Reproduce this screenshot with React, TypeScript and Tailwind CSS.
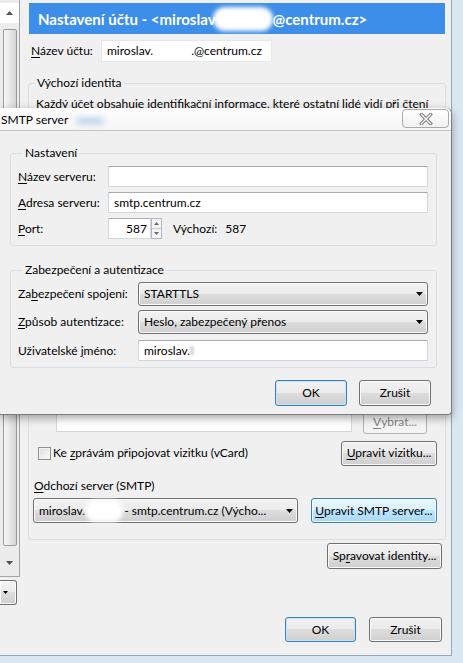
import React from 'react'

const btnNormal =
  'border border-[#707070] rounded-[3px] bg-[linear-gradient(#f2f2f2_0%,#ebebeb_49%,#dddddd_50%,#cfcfcf_100%)] shadow-[inset_0_0_0_1px_#fbfbfb]'
const btnFocus =
  'border border-[#3c7fb1] rounded-[3px] bg-[linear-gradient(#f2f2f2_0%,#ebebeb_49%,#dddddd_50%,#cfcfcf_100%)] shadow-[inset_0_0_0_1px_#c2e7f9]'
const btnHover =
  'border border-[#3c7fb1] rounded-[3px] bg-[linear-gradient(#eaf6fd_0%,#d9f0fc_49%,#bee6fd_50%,#a7d9f5_100%)] shadow-[inset_0_0_0_1px_#f4fbff]'
const textbox = 'bg-white border border-[#d3d6dc] border-t-[#abadb3]'

function Arrow({ color = '#000' }: { color?: string }) {
  return (
    <svg width="7" height="4" viewBox="0 0 7 4">
      <path d="M0 0h7L3.5 4z" fill={color} />
    </svg>
  )
}

function Btn({
  children,
  className = '',
  look = btnNormal,
}: {
  children: React.ReactNode
  className?: string
  look?: string
}) {
  return (
    <div className={`flex items-center justify-center ${look} ${className}`}>
      {children}
    </div>
  )
}

function Combo({ children, className = '' }: { children: React.ReactNode; className?: string }) {
  return (
    <div className={`flex items-center justify-between pl-[5px] pr-[4px] ${btnNormal} ${className}`}>
      <div className="flex items-center whitespace-nowrap">{children}</div>
      <Arrow />
    </div>
  )
}

export default function App() {
  return (
    <div className="relative w-[463px] h-[663px] overflow-hidden bg-[#d9e7f1] font-['Segoe_UI',Lato,sans-serif] text-[12px] leading-[16px] text-black">
      {/* background window: account settings */}
      <div className="flex w-[452px] h-[656px] bg-[#f0f0f0] border-r border-b border-[#8fa9bd]">
        {/* left account list */}
        <div className="flex flex-col w-[20px]">
          <div className="flex flex-col w-[20px] h-[577px] bg-white border-r border-b border-[#a5a5a5]">
            <div className="flex flex-col h-full w-[19px] bg-[#ececec]">
              <div className="flex items-center justify-center h-[20px] mt-[3px] bg-white">
                <svg width="7" height="4" viewBox="0 0 7 4">
                  <path d="M0 4h7L3.5 0z" fill="#505050" />
                </svg>
              </div>
              <div className="ml-[3px] mt-[6px] w-[14px] h-[517px] border border-[#9a9a9a] rounded-[2px] bg-[linear-gradient(90deg,#f6f6f6,#e3e3e3_60%,#d4d4d4)]" />
              <div className="flex items-center justify-center flex-1 pt-[4px]">
                <Arrow color="#505050" />
              </div>
            </div>
          </div>
          <div className={`mt-[3px] h-[25px] w-[17px] flex items-center pl-[3px] border-l-0 rounded-l-none ${btnNormal}`}>
            <svg width="5" height="3" viewBox="0 0 5 3">
              <path d="M0 0h5L2.5 3z" fill="#000" />
            </svg>
          </div>
        </div>

        {/* right pane */}
        <div className="flex flex-col pl-[8px] w-[432px]">
          <div className="ml-[1px] mt-[3px] w-[416px] h-[31px] bg-[#3d8ee8] flex items-center pl-[9px] text-white font-bold text-[15px] whitespace-nowrap">
            Nastavení účtu - &lt;miroslav
            <span className="inline-block w-[60px] h-[24px] -ml-[3px] bg-white rounded-full blur-[2px]" />
            @centrum.cz&gt;
          </div>

          <div className="flex items-center mt-[6px] h-[22px]">
            <span className="ml-[3px] w-[70px]">
              <u className="underline-offset-2">N</u>ázev účtu:
            </span>
            <div className="flex items-center w-[171px] h-[22px] pl-[5px] bg-white border border-[#e6e8ec]">
              miroslav.<span className="inline-block w-[38px]" />.@centrum.cz
            </div>
          </div>

          <fieldset className="mt-[13px] w-[418px] border border-[#d5dfe5] rounded-[3px] pl-[5px] pr-[8px] pb-[16px]">
            <legend className="ml-[1px] px-[2px] h-[16px]">Výchozí identita</legend>
            <p className="mt-[5px] ml-[2px] h-[16px] whitespace-nowrap overflow-hidden">
              Každý účet obsahuje identifikační informace, které ostatní lidé vidí při čtení
            </p>
            <div className="h-[298px]" />
            <div className="flex items-start h-[24px]">
              <div className={`ml-[22px] w-[296px] h-[22px] ${textbox}`} />
              <div className="ml-[11px] w-[64px] h-[24px] flex items-center justify-center border border-[#adb2b5] rounded-[3px] bg-[#f4f4f4] text-[#838383]">
                <u className="underline-offset-2">V</u>ybrat...
              </div>
            </div>
            <div className="flex items-center justify-between mt-[7px] h-[24px]">
              <div className="flex items-center">
                <div className="ml-[4px] w-[13px] h-[13px] border border-[#8e8f8f] bg-[linear-gradient(135deg,#dcdcdc,#fbfbfb)] shadow-[inset_0_0_0_1px_#f4f4f4]" />
                <span className="ml-[2px]">
                  Ke <u className="underline-offset-2">z</u>právám připojovat vizitku (vCard)
                </span>
              </div>
              <Btn className="w-[96px] h-[25px]">
                <span>
                  <u className="underline-offset-2">U</u>pravit vizitku...
                </span>
              </Btn>
            </div>
            <div className="mt-[13px] h-[16px]">
              <u className="underline-offset-2">O</u>dchozí server (SMTP)
            </div>
            <div className="flex items-center justify-between mt-[4px] h-[25px]">
              <Combo className="-ml-[1px] w-[265px] h-[25px]">
                miroslav.
                <span className="inline-block w-[38px] h-[22px] bg-white rounded-full blur-[2px]" />
                <span className="ml-[1px]">- smtp.centrum.cz (Výcho...</span>
              </Combo>
              <Btn look={btnHover} className="w-[126px] h-[25px]">
                <span>
                  <u className="underline-offset-2">U</u>pravit SMTP server...
                </span>
              </Btn>
            </div>
          </fieldset>

          <div className="flex justify-end mt-[3px] mr-[9px]">
            <Btn className="w-[115px] h-[26px]">
              <span>
                Sp<u className="underline-offset-2">r</u>avovat identity...
              </span>
            </Btn>
          </div>

          <div className="flex justify-end gap-[13px] mt-[48px] mr-[9px]">
            <Btn look={btnFocus} className="w-[71px] h-[25px]">
              OK
            </Btn>
            <Btn className="w-[73px] h-[25px]">Zrušit</Btn>
          </div>
        </div>
      </div>

      {/* SMTP server dialog on top */}
      <div className="absolute left-0 top-[108px] w-[452px] h-[307px] flex flex-col bg-[#f0f0f0] border-r border-b border-[#7d7d7d] rounded-tr-[6px] rounded-br-[4px] shadow-[0_3px_9px_rgba(0,0,0,0.35)]">
        <div className="relative h-[23px] flex items-center pl-[1px] pt-[2px] border-b border-[#c4c4c4] rounded-tr-[6px] bg-[linear-gradient(#fefefe,#f6f6f6)]">
          SMTP server
          <span className="absolute left-[76px] top-[10px] w-[28px] h-[6px] rounded-full bg-[#b4cde8] blur-[3px]" />
          <div className="absolute right-[2px] top-[1px] w-[47px] h-[19px] flex items-center justify-center border border-[#a9a9a9] rounded-[4px] bg-[linear-gradient(#ffffff,#f1f1f1)]">
            <svg width="14" height="12" viewBox="0 0 14 12">
              <path d="M2.5 1.5L11.5 10.5M11.5 1.5L2.5 10.5" stroke="#7b7b7b" strokeWidth="3.4" strokeLinecap="square" />
              <path d="M2.5 1.5L11.5 10.5M11.5 1.5L2.5 10.5" stroke="#ffffff" strokeWidth="1.4" strokeLinecap="square" />
            </svg>
          </div>
        </div>

        <div className="flex flex-col px-[10px]">
          <fieldset className="mt-[14px] w-[427px] border border-[#d5dfe5] rounded-[3px] pl-[7px] pr-[8px] pb-[6px]">
            <legend className="ml-[5px] px-[2px] h-[16px]">Nastavení</legend>
            <div className="flex flex-col gap-[5px] mt-[5px]">
              <div className="flex items-center h-[21px]">
                <span className="w-[90px]">
                  <u className="underline-offset-2">N</u>ázev serveru:
                </span>
                <div className={`w-[320px] h-[21px] ${textbox}`} />
              </div>
              <div className="flex items-center h-[21px]">
                <span className="w-[90px]">
                  <u className="underline-offset-2">A</u>dresa serveru:
                </span>
                <div className={`flex items-center w-[320px] h-[21px] pl-[5px] ${textbox}`}>smtp.centrum.cz</div>
              </div>
              <div className="flex items-center h-[21px]">
                <span className="w-[90px]">
                  <u className="underline-offset-2">P</u>ort:
                </span>
                <div className={`flex items-center justify-end w-[43px] h-[21px] pr-[3px] ${textbox}`}>587</div>
                <div className="flex flex-col w-[11px] h-[21px] border border-[#b5b8bf] bg-[#f3f3f3]">
                  <div className="flex-1 flex items-center justify-center border-b border-[#c8cbd0]">
                    <svg width="5" height="3" viewBox="0 0 5 3">
                      <path d="M0 3h5L2.5 0z" fill="#6b6b6b" />
                    </svg>
                  </div>
                  <div className="flex-1 flex items-center justify-center">
                    <svg width="5" height="3" viewBox="0 0 5 3">
                      <path d="M0 0h5L2.5 3z" fill="#6b6b6b" />
                    </svg>
                  </div>
                </div>
                <span className="ml-[11px] whitespace-nowrap">Výchozí:</span>
                <span className="ml-[8px]">587</span>
              </div>
            </div>
          </fieldset>

          <fieldset className="mt-[16px] w-[427px] border border-[#d5dfe5] rounded-[3px] pl-[7px] pr-[8px] pb-[6px]">
            <legend className="ml-[5px] px-[2px] h-[16px]">Zabezpečení a autentizace</legend>
            <div className="flex flex-col mt-[4px]">
              <div className="flex items-center h-[24px]">
                <span className="w-[120px]">
                  Za<u className="underline-offset-2">b</u>ezpečení spojení:
                </span>
                <Combo className="w-[290px] h-[24px]">STARTTLS</Combo>
              </div>
              <div className="flex items-center h-[24px] mt-[4px]">
                <span className="w-[120px]">
                  <u className="underline-offset-2">Z</u>působ autentizace:
                </span>
                <Combo className="w-[290px] h-[24px]">Heslo, zabezpečený přenos</Combo>
              </div>
              <div className="flex items-center h-[21px] mt-[6px]">
                <span className="w-[120px]">
                  Uživatelské <u className="underline-offset-2">j</u>méno:
                </span>
                <div className={`flex items-center w-[290px] h-[21px] pl-[5px] ${textbox}`}>
                  miroslav.
                  <span className="inline-block w-[4px] h-[9px] bg-[#d8d8d8] blur-[1px]" />
                </div>
              </div>
            </div>
          </fieldset>

          <div className="flex justify-end gap-[12px] mt-[12px] mr-[10px]">
            <Btn look={btnFocus} className="w-[72px] h-[26px]">
              OK
            </Btn>
            <Btn className="w-[72px] h-[26px]">Zrušit</Btn>
          </div>
        </div>
      </div>
    </div>
  )
}
